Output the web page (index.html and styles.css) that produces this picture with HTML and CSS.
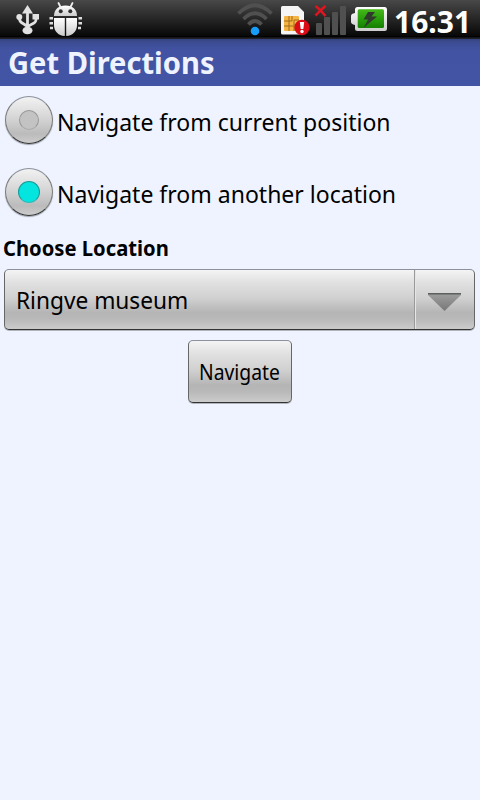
FILE: index.html
```html
<!DOCTYPE html>
<html lang="en">
<head>
<meta charset="utf-8">
<title>Get Directions</title>
<link rel="stylesheet" href="styles.css">
</head>
<body>
<header class="status">
  <svg class="icons" width="390" height="38" viewBox="0 0 390 38">
    <defs>
      <linearGradient id="silver" x1="0" y1="0" x2="0" y2="1"><stop offset="0" stop-color="#fff"/><stop offset="1" stop-color="#ccc"/></linearGradient>
      <linearGradient id="green" x1="0" y1="0" x2="0" y2="1"><stop offset="0" stop-color="#45b81a"/><stop offset=".45" stop-color="#2ba20d"/><stop offset="1" stop-color="#148000"/></linearGradient>
    </defs>
    <g fill="#e2e2e2" stroke="none">
      <path d="M27.500 5l5.500 8.500h-11z"/>
      <ellipse cx="27.500" cy="30.500" rx="5" ry="3.800"/>
      <circle cx="19.300" cy="17" r="3"/>
      <path d="M32.500 14h6.500v5.500h-6.500z"/>
      <path d="M27.500 11v18M19.500 18c0 5 3 4.500 8 8.500M36 19c0 5-3 3.500-8 7.500" fill="none" stroke="#e2e2e2" stroke-width="2.800"/>
    </g>
    <g fill="url(#silver)">
      <path d="M54 16c0-6 4-10.500 11.500-10.500S77 10 77 16z"/>
      <path d="M54 18h10.800v18C58 35.500 54 31 54 25zM66.200 18H77v7c0 6-4 10.500-10.800 11z"/>
    </g>
    <path d="M60.500 7l-2-4M70.500 7l2-4" stroke="#eee" stroke-width="1.800" stroke-linecap="round"/>
    <g fill="#303030"><circle cx="60.700" cy="11.200" r="2"/><circle cx="70.300" cy="11.200" r="2"/></g>
    <path d="M49.500 18.300H53M49.500 23.300H53M50 28H53M78.500 18.300H82M78.500 23.300H82M78 28H81" stroke="#ddd" stroke-width="2.400"/>
    <g fill="none" stroke="#505050" stroke-width="3.800">
      <path d="M238.500 13.500Q255 -3 271.500 13.500"/>
      <path d="M243.500 19Q255 7.500 266.500 19"/>
      <path d="M248.500 24.500Q255 17.500 261.500 24.500"/>
    </g>
    <circle cx="255" cy="31" r="4.300" fill="#189cfa"/>
    <path d="M281 7.500q0-1.500 1.500-1.500H298l6 6v21q0 1.500-1.500 1.500h-20q-1.500 0-1.500-1.500z" fill="#f5f5f5"/>
    <rect x="284" y="16" width="15" height="15" rx="1" fill="#f4b544"/>
    <path d="M284 21h5v-5M284 26h5v5M289 21v5M299 20h-5v11M294 25h5M292 16v5h-3M289 26h5" fill="none" stroke="#a46b18" stroke-width="1"/>
    <circle cx="302" cy="27.500" r="7.700" fill="#db0c16"/>
    <path d="M299.800 22h4.400l-.9 7h-2.600z" fill="#fff"/><circle cx="302" cy="31.500" r="1.700" fill="#fff"/>
    <g fill="#505050"><rect x="316" y="23" width="6" height="12" rx="1"/><rect x="324" y="17" width="6" height="18" rx="1"/><rect x="332" y="12" width="6" height="23" rx="1"/><rect x="340" y="6" width="6" height="29" rx="1"/></g>
    <path d="M315.500 6q5 3.500 10 10M325.500 6q-5 4-10 9.500" fill="none" stroke="#df1520" stroke-width="2.600"/>
    <path d="M355 9.500q0-2.500 2.500-2.500H384.500q2.500 0 2.500 2.500V28.500q0 2.500-2.500 2.500H357.500q-2.500 0-2.500-2.500V25q-4-1-4-3V16q0-2.500 4-3z" fill="url(#silver)"/>
    <rect x="357.700" y="9.300" width="26.300" height="18.700" rx="1.500" fill="url(#green)"/>
    <path d="M368 12h7l-3.500 4.500h5.500L363.500 28l4.500-8.500h-4.500z" fill="#303a2d"/>
  </svg>
  <span class="clock">16:31</span>
</header>
<h1 class="title"><span>Get Directions</span></h1>
<main>
  <label class="option"><i class="radio"></i><span class="lbl">Navigate from current position</span></label>
  <label class="option"><i class="radio on"></i><span class="lbl">Navigate from another location</span></label>
  <h2 class="choose"><span>Choose Location</span></h2>
  <div class="spinner">
    <div class="value"><span>Ringve museum</span></div>
    <div class="drop"><svg width="34" height="20" viewBox="0 0 34 20"><defs><linearGradient id="tri" x1="0" y1="0" x2="0" y2="1"><stop offset="0" stop-color="#a0a0a0"/><stop offset="1" stop-color="#777"/></linearGradient></defs><path d="M0 1h33v2L16.500 19 0 3z" fill="url(#tri)"/><path d="M0 1h33v1.500H0z" fill="#5d5f5e"/></svg></div>
  </div>
  <button class="go"><span>Navigate</span></button>
</main>
</body>
</html>
```
FILE: styles.css
```css
*, *::after { box-sizing: border-box; }
body {
  margin: 0;
  width: 480px;
  height: 800px;
  overflow: hidden;
  background: #eef3ff;
  color: #000;
  font-family: "Noto Sans", sans-serif;
}
span { display: inline-block; white-space: nowrap; transform-origin: 0 50%; }
.status {
  display: flex;
  height: 39px;
  background: linear-gradient(#484848 0, #2c2c2c 40%, #080808 92%, #000 94%, #1a1c20 97%, #24262c 100%);
}
.icons { flex: none; }
.clock {
  margin-left: 4px;
  color: #fff;
  font-size: 30px;
  font-weight: 700;
  line-height: 43px;
}
.title {
  margin: 0;
  height: 47px;
  padding-left: 8px;
  background: linear-gradient(#34437e 0, #3d4d94 8%, #4253a3 24%, #4254a4 100%);
  color: #eef3ff;
  font-size: 30px;
  font-weight: 700;
  line-height: 48px;
}
.title span { transform: scaleX(.97); }
main { display: flex; flex-direction: column; }
.option {
  display: flex;
  align-items: center;
  height: 72px;
  padding: 0 0 5px 5px;
  font-size: 24px;
}
.lbl { margin: 5px 0 0 4px; line-height: 34px; transform: scaleX(.959); }
.radio {
  display: flex;
  align-items: center;
  justify-content: center;
  flex: none;
  width: 48px;
  height: 48px;
  border: 1px solid #777;
  border-top-color: #8c919d;
  border-bottom-color: #333;
  border-radius: 50%;
  background: linear-gradient(#f2f2f2, #d6d6d6 45%, #bbb 80%, #ccc);
  box-shadow: 0 1px 1px #9ba0ab;
}
.radio::after {
  content: "";
  width: 20px;
  height: 20px;
  border: 1px solid #999;
  border-bottom-color: #aaa;
  border-radius: 50%;
  background: #c3c3c3;
}
.radio.on::after {
  width: 22px;
  height: 22px;
  border-color: #159d99;
  border-bottom-color: #3bb;
  background: #05e5df;
}
.choose {
  height: 39px;
  margin: 0;
  padding: 3px 0 0 3px;
  font-size: 21px;
  line-height: 30px;
}
.choose span { transform: scaleX(.962); }
.spinner, .go {
  border: 1px solid #666;
  border-top-color: #8c919d;
  border-bottom-color: #333;
  border-radius: 5px;
  background: linear-gradient(#f4f4f4, #e0e0e0 22%, #d0d0d0 48%, #b5b5b5 72%, #b8b8b8 82%, #cbcbcb);
  box-shadow: 0 1px 0 #b0b4bd;
}
.spinner {
  display: flex;
  height: 61px;
  margin: 0 5px 0 4px;
}
.value { flex: 1; padding-left: 11px; font-size: 24px; line-height: 60px; }
.value span { transform: scaleX(.945); }
.drop {
  display: flex;
  align-items: center;
  justify-content: center;
  width: 60px;
  padding-top: 4px;
  border-left: 1px solid #999;
  box-shadow: inset 1px 0 #e6e6e6;
}
.go {
  align-self: center;
  width: 104px;
  height: 63px;
  margin: 10px 0 0;
  padding: 0 0 0 10px;
  color: #000;
  font: 21px/62px "Noto Sans", sans-serif;
  text-align: left;
}
.go span { transform: scaleX(.92); }
```
